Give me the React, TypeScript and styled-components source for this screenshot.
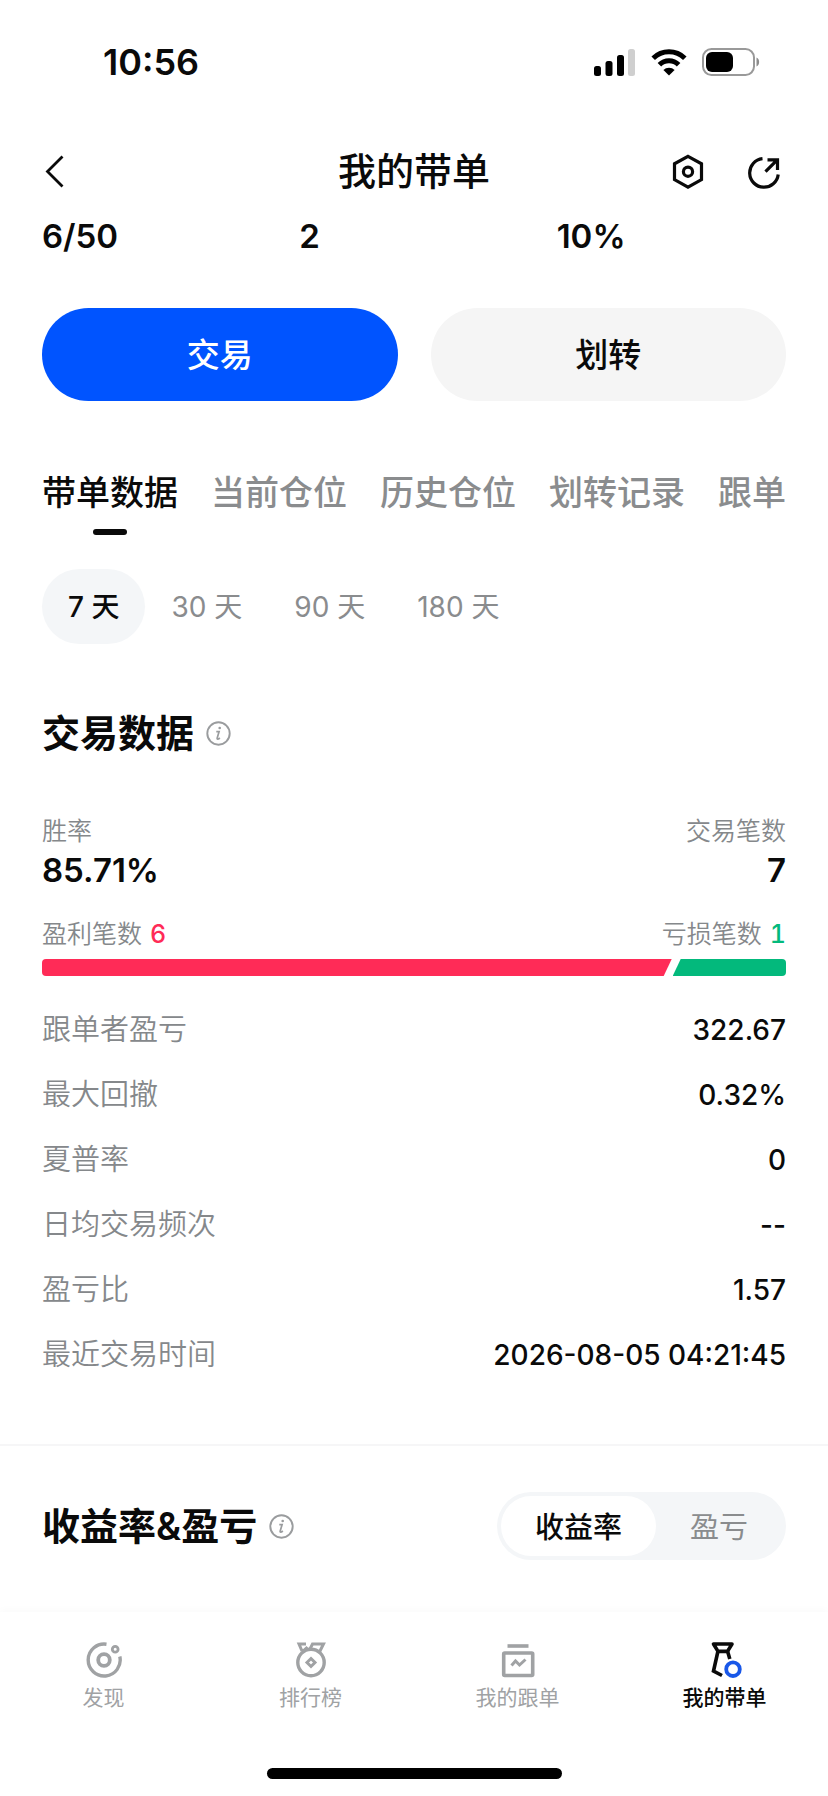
import React, { useState } from 'react';
import styled, { createGlobalStyle } from 'styled-components';

const GlobalStyle = createGlobalStyle`
  *, *::before, *::after { box-sizing: border-box; }
  body {
    margin: 0;
    background: #fff;
    color: #0a0a0a;
    font-family: Inter, "Noto Sans CJK SC", sans-serif;
  }
  button { font: inherit; color: inherit; border: 0; background: none; padding: 0; cursor: pointer; }
  h1, h2, dl, dd, dt, p { margin: 0; }
  svg { display: block; flex: none; }
`;

const Page = styled.div`
  min-height: 100vh;
  display: flex;
  flex-direction: column;
`;

const StatusBar = styled.div`
  display: flex;
  align-items: center;
  justify-content: space-between;
  height: 84px;
  padding: 40px 68px 0 103px;
`;

const Clock = styled.time`
  font-size: 36px;
  line-height: 44px;
  font-weight: 600;
`;

const StatusIcons = styled.div`
  display: flex;
  align-items: center;
  gap: 15px;
`;

const Header = styled.header`
  display: grid;
  grid-template-columns: 1fr auto 1fr;
  align-items: center;
  height: 64px;
  margin-top: 55px;
  padding: 0 42px;
`;

const Title = styled.h1`
  font-size: 38px;
  line-height: 48px;
  font-weight: 500;
`;

const HeaderActions = styled.div`
  display: flex;
  justify-content: flex-end;
  gap: 40px;
  padding-right: 4px;
`;

const IconButton = styled.button`
  display: flex;
  width: 36px;
  height: 36px;
`;

const Main = styled.main`
  display: flex;
  flex-direction: column;
`;

const Section = styled.section`
  display: flex;
  flex-direction: column;
  padding: 0 42px;
`;

const Stats = styled.div`
  display: grid;
  grid-template-columns: repeat(3, 1fr);
  column-gap: 28px;
  margin-top: 13px;
`;

const Figure = styled.span`
  font-size: 33px;
  line-height: 40px;
  font-weight: 600;
`;

const Actions = styled.div`
  display: grid;
  grid-template-columns: 1fr 1fr;
  gap: 33px;
  margin-top: 52px;
`;

const ActionButton = styled.button<{ $primary?: boolean }>`
  height: 93px;
  padding-bottom: 3px;
  border-radius: 47px;
  font-size: 33px;
  font-weight: 500;
  background: ${(p) => (p.$primary ? '#0054ff' : '#f5f5f5')};
  color: ${(p) => (p.$primary ? '#fff' : '#0a0a0a')};
`;

const Tabs = styled.div`
  display: flex;
  gap: 33px;
  margin-top: 68px;
  overflow: hidden;
`;

const Tab = styled.button<{ $active: boolean }>`
  display: flex;
  flex-direction: column;
  align-items: center;
  flex: none;
  gap: 12px;
  font-size: 34px;
  line-height: 48px;
  font-weight: 500;
  white-space: nowrap;
  color: ${(p) => (p.$active ? '#0a0a0a' : '#8a8c8e')};

  &::after {
    content: "";
    width: 34px;
    height: 6px;
    border-radius: 3px;
    background: ${(p) => (p.$active ? '#0a0a0a' : 'transparent')};
  }
`;

const Periods = styled.div`
  display: flex;
  margin-top: 34px;
`;

const Period = styled.button<{ $active: boolean }>`
  height: 75px;
  padding: 0 26px 4px;
  border-radius: 38px;
  font-size: 28px;
  font-weight: ${(p) => (p.$active ? 500 : 400)};
  background: ${(p) => (p.$active ? '#f4f6f8' : 'transparent')};
  color: ${(p) => (p.$active ? '#0a0a0a' : '#8a8c8e')};
`;

const Heading = styled.div`
  display: flex;
  align-items: center;
  gap: 12px;
`;

const HeadingText = styled.h2`
  font-size: 38px;
  line-height: 48px;
  font-weight: 600;
`;

const InfoButton = styled.button`
  width: 25px;
  height: 25px;
`;

const DataHeading = styled(Heading)`
  margin-top: 65px;
`;

const Split = styled.div`
  display: flex;
  justify-content: space-between;
`;

const Summary = styled(Split)`
  margin-top: 58px;
`;

const Counts = styled(Split)`
  margin-top: 28px;
`;

const SummaryItem = styled.div<{ $end?: boolean }>`
  display: flex;
  flex-direction: column;
  gap: 3px;
  align-items: ${(p) => (p.$end ? 'flex-end' : 'flex-start')};
`;

const Caption = styled.span`
  font-size: 25px;
  line-height: 32px;
  font-weight: 350;
  color: #85888b;
`;

const Count = styled.span<{ $gain?: boolean }>`
  margin-left: 8px;
  font-weight: 500;
  font-variant-numeric: tabular-nums;
  color: ${(p) => (p.$gain ? '#ff2b57' : '#03b97c')};
`;

const Ratio = styled.div`
  display: flex;
  height: 17px;
  margin-top: 9px;
  border-radius: 4px;
  overflow: hidden;
`;

const GainBar = styled.div`
  margin-right: 1px;
  background: #ff2b57;
  clip-path: polygon(0 0, 100% 0, calc(100% - 8px) 100%, 0 100%);
`;

const LossBar = styled.div`
  flex: 1;
  background: #03b97c;
  clip-path: polygon(8px 0, 100% 0, 100% 100%, 0 100%);
`;

const Metrics = styled.dl`
  margin-top: 21px;
`;

const Metric = styled.div`
  display: flex;
  align-items: center;
  justify-content: space-between;
  height: 65px;
  line-height: 40px;
`;

const MetricName = styled.dt`
  font-size: 29px;
  font-weight: 350;
  color: #85888b;
`;

const MetricValue = styled.dd`
  font-size: 28px;
  font-weight: 500;
`;

const Divider = styled.hr`
  width: 100%;
  height: 2px;
  margin: 57px 0 46px;
  border: 0;
  background: #f6f6f7;
`;

const ReturnsHeader = styled.div`
  display: flex;
  align-items: center;
  justify-content: space-between;
`;

const Segmented = styled.div`
  display: flex;
  padding: 4px;
  border-radius: 34px;
  background: #f4f6f8;
`;

const Segment = styled.button<{ $active: boolean }>`
  height: 60px;
  padding: 0 34px 3px;
  border-radius: 30px;
  font-size: 29px;
  font-weight: ${(p) => (p.$active ? 500 : 400)};
  background: ${(p) => (p.$active ? '#fff' : 'transparent')};
  color: ${(p) => (p.$active ? '#0a0a0a' : '#8a8c8e')};
`;

const BottomBar = styled.footer`
  position: sticky;
  bottom: 0;
  display: flex;
  flex-direction: column;
  align-items: center;
  margin-top: auto;
  padding: 30px 0 17px;
  background: #fff;
  box-shadow: 0 -2px 8px rgba(0, 0, 0, 0.025);
`;

const Nav = styled.nav`
  display: grid;
  grid-template-columns: repeat(4, 1fr);
  width: 100%;
`;

const NavLink = styled.a<{ $active?: boolean }>`
  display: flex;
  flex-direction: column;
  align-items: center;
  gap: 6px;
  font-size: 21px;
  line-height: 28px;
  text-decoration: none;
  font-weight: ${(p) => (p.$active ? 500 : 400)};
  color: ${(p) => (p.$active ? '#0a0a0a' : '#a0a2a4')};
`;

const HomeIndicator = styled.div`
  width: 295px;
  height: 11px;
  margin-top: 56px;
  border-radius: 6px;
  background: #000;
`;

const SignalIcon = () => (
  <svg width="42" height="27" viewBox="0 0 42 27" aria-hidden="true">
    <rect x="0" y="17" width="7" height="10" rx="2.5" />
    <rect x="11.5" y="12" width="7" height="15" rx="2.5" />
    <rect x="23" y="6" width="7" height="21" rx="2.5" />
    <rect x="34" y="0" width="7" height="27" rx="2.5" fill="#cfcfcf" />
  </svg>
);

const WifiIcon = () => (
  <svg width="36" height="27" viewBox="0 0 36 27" fill="none" stroke="#000" strokeWidth="5" aria-hidden="true">
    <path d="M2.2 9.2a22.5 22.5 0 0 1 31.6 0" />
    <path d="M8.4 15.8a13.6 13.6 0 0 1 19.2 0" />
    <path d="M18 26.6l-5.6-5.6a8 8 0 0 1 11.2 0z" fill="#000" stroke="none" />
  </svg>
);

const BatteryIcon = () => (
  <svg width="58" height="28" viewBox="0 0 58 28" aria-hidden="true">
    <rect x="1" y="1" width="51" height="26" rx="8.5" fill="none" stroke="#999" strokeWidth="2" />
    <rect x="4" y="4" width="27" height="20" rx="6" />
    <path d="M54.5 9.5c3.5 1.5 3.5 7.5 0 9z" fill="#8c8c8c" />
  </svg>
);

const BackIcon = () => (
  <svg width="36" height="36" viewBox="0 0 36 36" fill="none" stroke="#0a0a0a" strokeWidth="2.8" aria-hidden="true">
    <path d="M20.5 3.5L5.5 18.5l15 15" />
  </svg>
);

const SettingsIcon = () => (
  <svg width="36" height="36" viewBox="0 0 36 36" fill="none" stroke="#0a0a0a" strokeWidth="3.2" aria-hidden="true">
    <path d="M18 3.300l13.500 7.500v15.800L18 34.100 4.500 26.600v-15.800z" />
    <circle cx="18" cy="18.700" r="4.600" />
  </svg>
);

const ShareIcon = () => (
  <svg width="36" height="36" viewBox="0 0 36 36" fill="none" stroke="#0a0a0a" strokeWidth="3.2" aria-hidden="true">
    <path d="M16.500 5.700A14.300 14.300 0 1 0 32.200 21.500" />
    <path d="M21.500 6.800h10v10.200M31 7.200L19.500 18.700" />
  </svg>
);

const InfoIcon = () => (
  <svg width="25" height="25" viewBox="0 0 25 25" fill="none" stroke="#9a9c9e" aria-hidden="true">
    <circle cx="12.5" cy="12.5" r="11.2" strokeWidth="1.9" />
    <path d="M10.3 10.6h2.8l-1.9 6.300c-.4 1.600.9 1.500 2.700.1" strokeWidth="1.700" />
    <circle cx="13.700" cy="7" r="1.300" fill="#9a9c9e" stroke="none" />
  </svg>
);

const DiscoverIcon = () => (
  <svg width="36" height="36" viewBox="0 0 36 36" fill="none" stroke="currentColor" strokeWidth="3.4" aria-hidden="true">
    <path d="M20.500 2.200A16 16 0 1 0 33.800 14.500" />
    <circle cx="18" cy="18" r="5.800" strokeWidth="3.800" />
    <circle cx="29.200" cy="7.200" r="2.900" strokeWidth="2.800" />
  </svg>
);

const RankingIcon = () => (
  <svg width="36" height="36" viewBox="0 0 36 36" fill="none" stroke="currentColor" strokeWidth="3.4" aria-hidden="true">
    <circle cx="18" cy="20.500" r="13.200" />
    <path d="M18 16.500l4 4-4 4-4-4z" strokeWidth="3" />
    <path d="M13 2H6l3 7M9.500 9.500l5-4.500M16.500 8l3-6h11l-4 8" strokeWidth="3" />
  </svg>
);

const CopyIcon = () => (
  <svg width="36" height="36" viewBox="0 0 36 36" fill="none" stroke="currentColor" strokeWidth="3.600" aria-hidden="true">
    <path d="M7.500 4h21" />
    <rect x="3.700" y="11" width="29" height="22.500" rx="1" />
    <path d="M11.500 23.500l4-4.500 4 4 6-5.500" strokeWidth="3" />
  </svg>
);

const LeadIcon = () => (
  <svg width="36" height="36" viewBox="0 0 36 36" fill="none" stroke="currentColor" strokeWidth="3.600" aria-hidden="true">
    <path d="M6.500 2h18.500l-4.500 7.400h-9.500z" strokeLinejoin="round" />
    <path d="M11 9L6.500 29l8.500 4.500M20.500 9l2.300 8" />
    <circle cx="26" cy="27.200" r="6.800" stroke="#1857e8" strokeWidth="3.800" />
  </svg>
);

const TABS = ['带单数据', '当前仓位', '历史仓位', '划转记录', '跟单'];
const PERIODS = ['7 天', '30 天', '90 天', '180 天'];
const SERIES = ['收益率', '盈亏'];

const METRICS = [
  ['跟单者盈亏', '322.67'],
  ['最大回撤', '0.32%'],
  ['夏普率', '0'],
  ['日均交易频次', '--'],
  ['盈亏比', '1.57'],
  ['最近交易时间', '2026-08-05 04:21:45'],
];

const NAV = [
  { label: '发现', href: '#discover', Icon: DiscoverIcon },
  { label: '排行榜', href: '#ranking', Icon: RankingIcon },
  { label: '我的跟单', href: '#copying', Icon: CopyIcon },
  { label: '我的带单', href: '#leading', Icon: LeadIcon },
];

const WINS = 6;
const LOSSES = 1;

export default function App() {
  const [tab, setTab] = useState(TABS[0]);
  const [period, setPeriod] = useState(PERIODS[0]);
  const [series, setSeries] = useState(SERIES[0]);
  const winShare = (WINS / (WINS + LOSSES)) * 100;

  return (
    <Page>
      <GlobalStyle />
      <StatusBar>
        <Clock>10:56</Clock>
        <StatusIcons>
          <SignalIcon />
          <WifiIcon />
          <BatteryIcon />
        </StatusIcons>
      </StatusBar>

      <Header>
        <IconButton aria-label="返回"><BackIcon /></IconButton>
        <Title>我的带单</Title>
        <HeaderActions>
          <IconButton aria-label="设置"><SettingsIcon /></IconButton>
          <IconButton aria-label="分享"><ShareIcon /></IconButton>
        </HeaderActions>
      </Header>

      <Main>
        <Section>
          <Stats>
            <Figure>6/50</Figure>
            <Figure>2</Figure>
            <Figure>10%</Figure>
          </Stats>
          <Actions>
            <ActionButton $primary>交易</ActionButton>
            <ActionButton>划转</ActionButton>
          </Actions>
          <Tabs role="tablist">
            {TABS.map((t) => (
              <Tab key={t} role="tab" aria-selected={t === tab} $active={t === tab} onClick={() => setTab(t)}>
                {t}
              </Tab>
            ))}
          </Tabs>
          <Periods>
            {PERIODS.map((p) => (
              <Period key={p} aria-pressed={p === period} $active={p === period} onClick={() => setPeriod(p)}>
                {p}
              </Period>
            ))}
          </Periods>
        </Section>

        <Section>
          <DataHeading>
            <HeadingText>交易数据</HeadingText>
            <InfoButton aria-label="交易数据说明"><InfoIcon /></InfoButton>
          </DataHeading>
          <Summary>
            <SummaryItem>
              <Caption>胜率</Caption>
              <Figure>85.71%</Figure>
            </SummaryItem>
            <SummaryItem $end>
              <Caption>交易笔数</Caption>
              <Figure>7</Figure>
            </SummaryItem>
          </Summary>
          <Counts>
            <Caption>盈利笔数<Count $gain>{WINS}</Count></Caption>
            <Caption>亏损笔数<Count>{LOSSES}</Count></Caption>
          </Counts>
          <Ratio>
            <GainBar style={{ width: `calc(${winShare}% - 8px)` }} />
            <LossBar />
          </Ratio>
          <Metrics>
            {METRICS.map(([name, value]) => (
              <Metric key={name}>
                <MetricName>{name}</MetricName>
                <MetricValue>{value}</MetricValue>
              </Metric>
            ))}
          </Metrics>
        </Section>

        <Divider />

        <Section>
          <ReturnsHeader>
            <Heading>
              <HeadingText>收益率&amp;盈亏</HeadingText>
              <InfoButton aria-label="收益率与盈亏说明"><InfoIcon /></InfoButton>
            </Heading>
            <Segmented>
              {SERIES.map((s) => (
                <Segment key={s} aria-pressed={s === series} $active={s === series} onClick={() => setSeries(s)}>
                  {s}
                </Segment>
              ))}
            </Segmented>
          </ReturnsHeader>
        </Section>
      </Main>

      <BottomBar>
        <Nav>
          {NAV.map(({ label, href, Icon }, i) => (
            <NavLink key={label} href={href} $active={i === 3} aria-current={i === 3 ? 'page' : undefined}>
              <Icon />
              {label}
            </NavLink>
          ))}
        </Nav>
        <HomeIndicator />
      </BottomBar>
    </Page>
  );
}
